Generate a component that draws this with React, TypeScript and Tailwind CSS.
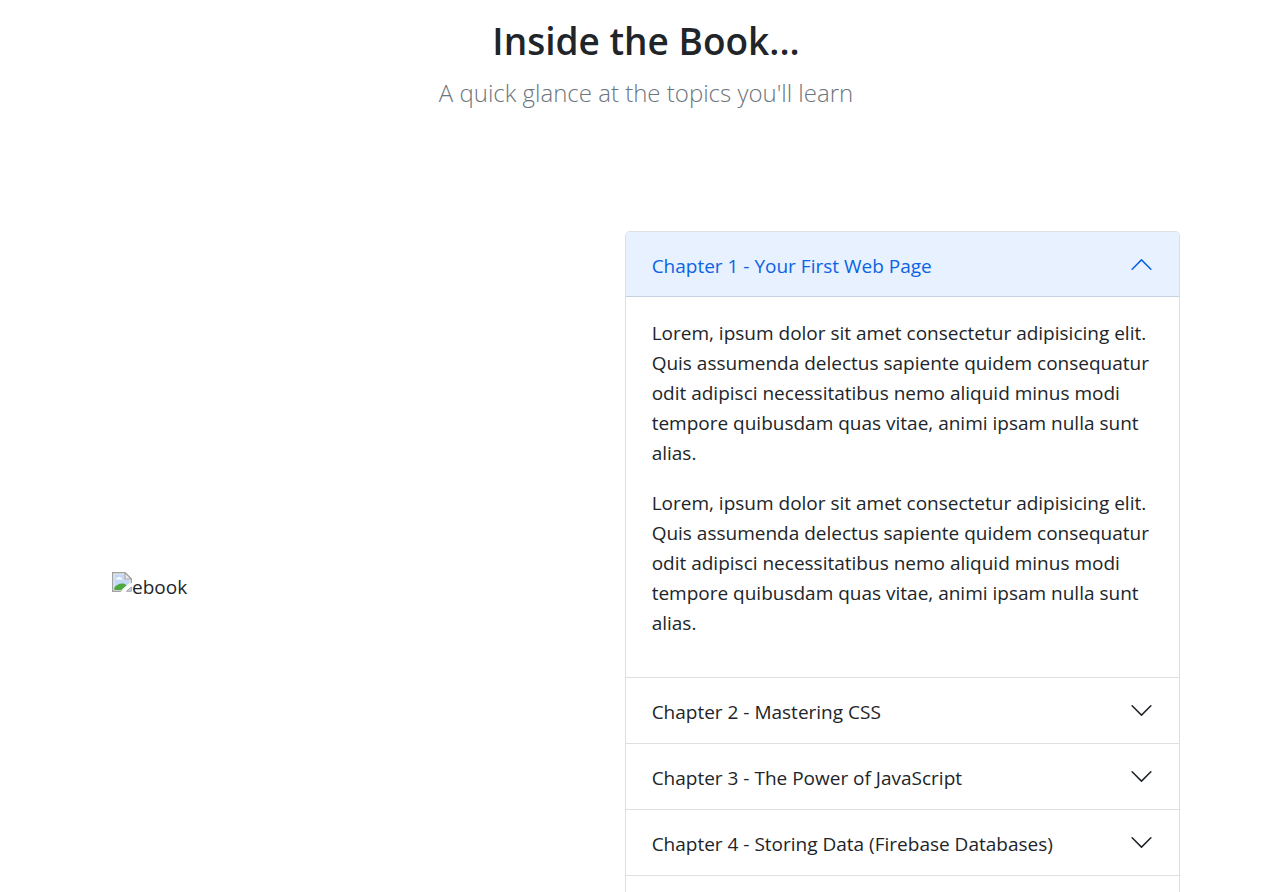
import { useState } from "react";
import type { ReactNode } from "react";

const lorem =
  "Lorem, ipsum dolor sit amet consectetur adipisicing elit. Quis assumenda delectus sapiente quidem consequatur odit adipisci necessitatibus nemo aliquid minus modi tempore quibusdam quas vitae, animi ipsam nulla sunt alias.";

const chapters = [
  "Chapter 1 - Your First Web Page",
  "Chapter 2 - Mastering CSS",
  "Chapter 3 - The Power of JavaScript",
  "Chapter 4 - Storing Data (Firebase Databases)",
  "Chapter 5",
];

function Chevron({ open }: { open: boolean }) {
  return (
    <svg
      viewBox="0 0 16 16"
      fill="currentColor"
      aria-hidden="true"
      className={open ? "size-[25px] shrink-0 rotate-180" : "size-[25px] shrink-0"}
    >
      <path
        fillRule="evenodd"
        d="M1.646 4.646a.5.5 0 0 1 .708 0L8 10.293l5.646-5.647a.5.5 0 0 1 .708.708l-6 6a.5.5 0 0 1-.708 0l-6-6a.5.5 0 0 1 0-.708z"
      />
    </svg>
  );
}

function MissingImage({ label }: { label: string }) {
  return (
    <div role="img" aria-label={label} className="flex items-start">
      <svg viewBox="0 0 20 20" className="size-5 shrink-0" aria-hidden="true">
        <path d="M.7.7H13l6.3 6.3v5L11 19.3H.7z" fill="#fff" stroke="#a3a3a3" strokeWidth="1.4" />
        <path d="M2.3 2.3h10.2v5.2h5.2V11L9 17.7H2.3z" fill="#c3d7f7" />
        <path d="M4 7.4c0-1 .8-1.4 1.5-1.3C5.8 4.6 8 4.5 8.5 5.8c1-.1 1.7.5 1.7 1.6z" fill="#fff" />
        <path d="M2.3 15.5C4.5 13.3 7 11.6 10 11.6c2 0 3.4.6 4.6 1.6L9.500 18H2.300z" fill="#4fa83d" />
        <path d="M13 .7V7h6.300z" fill="#eee" stroke="#a3a3a3" strokeWidth="1.2" />
        <path d="M20 10.500V14l-6.500 6H8.500z" fill="#fff" />
        <path d="M19.300 15v4.300H14.500z" fill="#c3d7f7" stroke="#a3a3a3" strokeWidth="1" />
      </svg>
      <span className="leading-[30px]">{label}</span>
    </div>
  );
}

function Item({
  id,
  title,
  open,
  onToggle,
  children,
}: {
  id: string;
  title: string;
  open: boolean;
  onToggle: () => void;
  children: ReactNode;
}) {
  return (
    <div className="border-b border-[#dedfe0]">
      <h3>
        <button
          type="button"
          aria-expanded={open}
          aria-controls={id}
          onClick={onToggle}
          className={
            open
              ? "flex h-[65px] w-full items-center justify-between border-b border-[#c7d0e0] bg-[#e7f1ff] pr-[25px] pl-[26px] text-left text-[#0c63e4]"
              : "flex h-[65px] w-full items-center justify-between pr-[25px] pl-[26px] text-left"
          }
        >
          <span className="pt-[3px] leading-6">{title}</span>
          <Chevron open={open} />
        </button>
      </h3>
      {open && (
        <div id={id} className="pt-[21px] pr-[25px] pb-[19px] pl-[26px] leading-[30px]">
          {children}
        </div>
      )}
    </div>
  );
}

export default function App() {
  const [active, setActive] = useState(0);
  return (
    <main className="min-h-screen bg-white pr-[95px] pl-28 font-['Open_Sans','Noto_Sans',sans-serif] text-[19px] text-[#212529]">
      <header className="pt-[17px] text-center">
        <h1 className="text-[37px] leading-12 font-semibold">Inside the Book...</h1>
        <p className="mt-2.5 text-2xl leading-9 font-light text-[#6c757d]">
          A quick glance at the topics you'll learn
        </p>
      </header>
      <section className="mt-30 grid grid-cols-[12fr_13fr] items-center">
        <MissingImage label="ebook" />
        <div className="overflow-hidden rounded-[5px] border border-b-0 border-[#dedfe0]">
          {chapters.map((title, i) => (
            <Item
              key={title}
              id={`chapter-${i + 1}`}
              title={title}
              open={active === i}
              onToggle={() => setActive(active === i ? -1 : i)}
            >
              <p className="mb-5">{lorem}</p>
              <p className="mb-5">{lorem}</p>
            </Item>
          ))}
        </div>
      </section>
    </main>
  );
}
